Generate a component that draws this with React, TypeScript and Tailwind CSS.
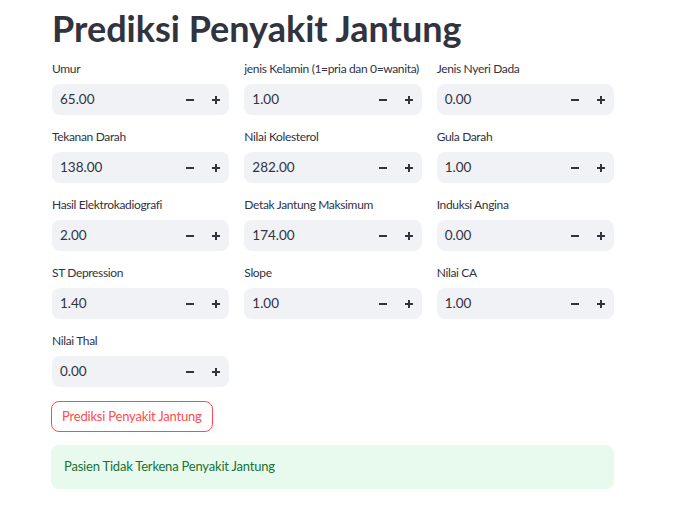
const fields = [
  { label: 'Umur', value: '65.00' },
  { label: 'jenis Kelamin (1=pria dan 0=wanita)', value: '1.00' },
  { label: 'Jenis Nyeri Dada', value: '0.00' },
  { label: 'Tekanan Darah', value: '138.00' },
  { label: 'Nilai Kolesterol', value: '282.00' },
  { label: 'Gula Darah', value: '1.00' },
  { label: 'Hasil Elektrokadiografi', value: '2.00' },
  { label: 'Detak Jantung Maksimum', value: '174.00' },
  { label: 'Induksi Angina', value: '0.00' },
  { label: 'ST Depression', value: '1.40' },
  { label: 'Slope', value: '1.00' },
  { label: 'Nilai CA', value: '1.00' },
  { label: 'Nilai Thal', value: '0.00' },
]

function NumberInput({ label, value }: { label: string; value: string }) {
  return (
    <div className="flex flex-col">
      <label className="h-[23px] whitespace-nowrap text-[12px] leading-[16px] tracking-[-0.35px] text-[#31333f]">
        {label}
      </label>
      <div className="flex h-[31px] items-center rounded-lg bg-[#f0f2f6] pl-2">
        <span className="flex-1 text-[13.5px] text-[#31333f]">{value}</span>
        <button className="flex h-full w-[26px] items-center justify-center">
          <svg width="8" height="8" viewBox="0 0 8 8">
            <rect x="0" y="3" width="8" height="2" fill="#31333f" />
          </svg>
        </button>
        <button className="flex h-full w-[26px] items-center justify-center">
          <svg width="8" height="8" viewBox="0 0 8 8">
            <rect x="0" y="3" width="8" height="2" fill="#31333f" />
            <rect x="3" y="0" width="2" height="8" fill="#31333f" />
          </svg>
        </button>
      </div>
    </div>
  )
}

export default function App() {
  return (
    <div className="min-h-screen bg-white" style={{ fontFamily: 'Lato, "Noto Sans", sans-serif' }}>
      <div className="ml-[52px] w-[562px] pt-[6px]">
        <h1 className="mb-[11px] text-[36px] font-bold leading-[44px] text-[#31333f]">Prediksi Penyakit Jantung</h1>
        <div className="grid grid-cols-3 gap-x-[15px] gap-y-[14px]">
          {fields.map((f) => (
            <NumberInput key={f.label} label={f.label} value={f.value} />
          ))}
        </div>
        <button className="-ml-[1px] mt-[14px] h-[31px] rounded-lg border border-[#ff4b4b] px-[10px] text-[13px] tracking-[-0.2px] text-[#ff4b4b]">
          Prediksi Penyakit Jantung
        </button>
        <div className="-ml-[1px] mt-[13px] flex h-[44px] items-center rounded-lg bg-[#e8f9ee] px-[13px] text-[13px] tracking-[-0.2px] text-[#177233]">
          Pasien Tidak Terkena Penyakit Jantung
        </div>
      </div>
    </div>
  )
}
